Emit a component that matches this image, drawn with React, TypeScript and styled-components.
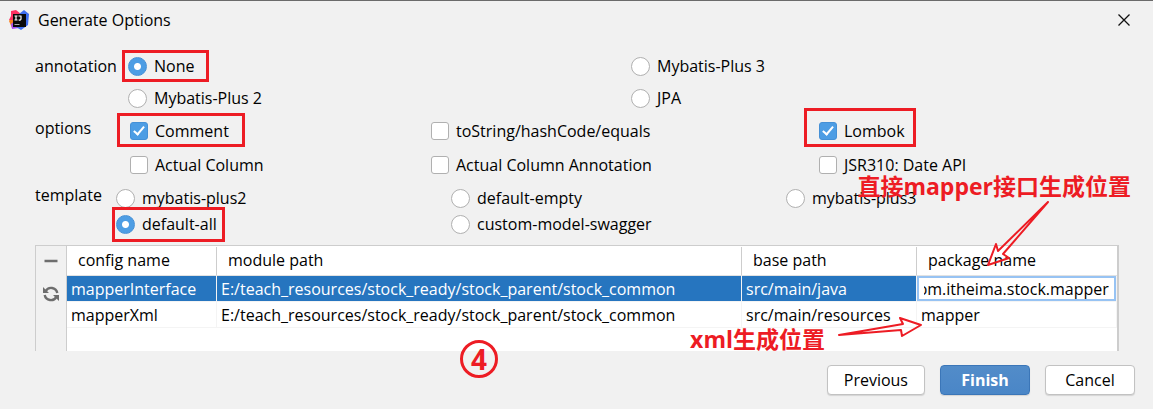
import React, { useEffect, useRef, useState } from "react";
import styled, { createGlobalStyle, css } from "styled-components";

const red = "#ed1c24";
const blue = "#4d9de4";

const GlobalStyle = createGlobalStyle`
  *, *::before, *::after { box-sizing: border-box; }
  body { margin: 0; background: #f1f1f1; }
  body, button, input { font-family: "Open Sans", "Noto Sans CJK SC", sans-serif; font-size: 16px; color: #000; }
`;

const Dialog = styled.main`
  position: relative;
  border-top: 1px solid #6b6b6b;
  background: #f1f1f1;
  min-height: 100vh;
  line-height: 24px;
  overflow: hidden;
`;

const TitleBar = styled.header`
  display: flex;
  align-items: center;
  gap: 9px;
  height: 37px;
  padding: 0 23px 0 9px;
`;

const Title = styled.h1`
  flex: 1;
  margin: 0;
  font-size: 16px;
  font-weight: 400;
`;

const CloseButton = styled.button`
  display: flex;
  padding: 0;
  border: 0;
  background: none;
`;

const Form = styled.form`
  padding: 12px 18px 0 35px;
`;

const Section = styled.div<{ $indent: number; $after: number }>`
  display: grid;
  grid-template-columns: ${(p) => p.$indent}px 1fr;
  margin: 0 14px ${(p) => p.$after}px 0;
`;

const SectionLabel = styled.span<{ $line: number }>`
  line-height: ${(p) => p.$line}px;
`;

const Choices = styled.div<{ $columns: string; $row: number }>`
  display: grid;
  grid-template-columns: ${(p) => p.$columns};
  grid-auto-rows: ${(p) => p.$row}px;
  align-items: center;
  justify-items: start;
`;

const Choice = styled.label<{ $frame?: string }>`
  position: relative;
  display: flex;
  align-items: center;
  gap: 7px;
  white-space: nowrap;
  ${(p) =>
    p.$frame &&
    css`
      &::after {
        content: "";
        position: absolute;
        inset: ${p.$frame};
        border: 3px solid ${red};
        pointer-events: none;
      }
    `}
`;

const Radio = styled.input.attrs({ type: "radio" })`
  appearance: none;
  width: 19px;
  height: 19px;
  margin: 0;
  border: 1px solid #b0b0b0;
  border-radius: 50%;
  background: #fff;
  &:checked {
    border-color: #4590d6;
    background: radial-gradient(circle, #fff 3px, ${blue} 4px);
  }
`;

const Checkbox = styled.input.attrs({ type: "checkbox" })`
  appearance: none;
  display: grid;
  place-items: center;
  width: 18px;
  height: 18px;
  margin: 0;
  border: 1px solid #b0b0b0;
  border-radius: 3px;
  background: #fff;
  &:checked {
    border-color: #4590d6;
    background: ${blue};
  }
  &:checked::before {
    content: "";
    width: 6px;
    height: 11px;
    margin-bottom: 3px;
    border: solid #fff;
    border-width: 0 2px 2px 0;
    transform: rotate(40deg);
  }
`;

const Panel = styled.div`
  display: flex;
  height: 106px;
  margin-right: 16px;
  border: solid #cdcdcd;
  border-width: 1px 2px 0 1px;
  background: #fff;
`;

const Tools = styled.div`
  display: flex;
  flex-direction: column;
  align-items: center;
  gap: 16px;
  width: 31px;
  padding-top: 7px;
  border-right: 1px solid #cdcdcd;
  background: #f1f1f1;
`;

const ToolButton = styled.button`
  display: flex;
  padding: 0;
  border: 0;
  background: none;
  color: #6e6e6e;
`;

const Table = styled.table`
  flex: 1;
  align-self: flex-start;
  width: 100%;
  table-layout: fixed;
  border-collapse: separate;
  border-spacing: 0;
`;

const Col = styled.col<{ $width?: number }>`
  width: ${(p) => (p.$width ? `${p.$width}px` : "auto")};
`;

const HeadCell = styled.th`
  height: 30px;
  padding: 0 11px 2px;
  border-bottom: 1px solid #e2e2e2;
  background: linear-gradient(#cdcdcd, #cdcdcd) right center / 1px 28px no-repeat;
  font-weight: 400;
  text-align: left;
  &:last-child { background: none; }
`;

const Row = styled.tr<{ $selected?: boolean }>`
  background: ${(p) => (p.$selected ? "#2675bf" : "#fff")};
  color: ${(p) => (p.$selected ? "#fff" : "#000")};
`;

const Cell = styled.td`
  height: 26px;
  padding: 0 4px;
  border: solid #f4f4f4;
  border-width: 0 1px 1px 0;
  white-space: nowrap;
`;

const EditCell = styled(Cell)`
  padding: 0;
  background: #fff;
`;

const CellInput = styled.input`
  display: block;
  width: 100%;
  height: 25px;
  padding: 0 5px;
  border: 2px solid #97c3f3;
  outline: 0;
  background: #fff;
`;

const Footer = styled.footer`
  display: flex;
  justify-content: flex-end;
  gap: 15px;
  padding: 14px 0;
`;

const Button = styled.button<{ $primary?: boolean }>`
  height: 30px;
  min-width: 90px;
  padding: 0 16px;
  border: 1px solid ${(p) => (p.$primary ? "#3b76b8" : "#c2c2c2")};
  border-radius: 4px;
  background: ${(p) => (p.$primary ? "linear-gradient(#528cc9, #4a86c7)" : "#fff")};
  box-shadow: 0 1px 1px rgba(0, 0, 0, 0.12);
  color: ${(p) => (p.$primary ? "#fff" : "#000")};
  font-weight: ${(p) => (p.$primary ? 700 : 400)};
`;

const Note = styled.p<{ $right: number; $top: number }>`
  position: absolute;
  right: ${(p) => p.$right}px;
  top: ${(p) => p.$top}px;
  margin: 0;
  color: ${red};
  font-size: 23px;
  font-weight: 700;
  line-height: 32px;
  white-space: nowrap;
  pointer-events: none;
`;

const Arrow = styled.svg<{ $right: number; $top: number }>`
  position: absolute;
  right: ${(p) => p.$right}px;
  top: ${(p) => p.$top}px;
  fill: none;
  stroke: ${red};
  stroke-width: 2;
  stroke-linejoin: round;
  pointer-events: none;
`;

const Step = styled.span`
  position: absolute;
  right: 655px;
  top: 339px;
  display: grid;
  place-items: center;
  width: 38px;
  height: 38px;
  border: 3px solid ${red};
  border-radius: 50%;
  color: ${red};
  font-size: 28px;
  font-weight: 700;
  line-height: 32px;
  pointer-events: none;
`;

const IdeaLogo = () => (
  <svg width="20" height="20" viewBox="0 0 20 20" aria-hidden="true">
    <path d="M0 11 3 6 9 11 7 17 3 18z" fill="#fc801d" />
    <path d="M2 1 7 0 12 4 6 10 0 10 2 6z" fill="#fe2f62" />
    <path d="M2 14 7 10 13 17 10 18 3 19z" fill="#a64df0" />
    <path d="M10 4 15 0 20 4 19 15 12 20 7 17z" fill="#3f6ff0" />
    <rect x="4" y="4" width="13" height="13" fill="#0a0a0a" />
    <path d="M5.500 6h3M7 6v4M5.500 10h3M9.500 6h3M12 6v3q0 1.200-2.400 1" fill="none" stroke="#fff" strokeWidth="1.200" />
    <path d="M5.500 14.500h5" stroke="#aaa" strokeWidth="1" />
  </svg>
);

const CloseIcon = () => (
  <svg width="12" height="12" viewBox="0 0 12 12" aria-hidden="true">
    <path d="M.5.5l11 11M11.500.5l-11 11" stroke="#111" strokeWidth="1.300" />
  </svg>
);

const MinusIcon = () => (
  <svg width="16" height="16" viewBox="0 0 16 16" aria-hidden="true">
    <path d="M1.500 8h13" stroke="currentColor" strokeWidth="2.500" />
  </svg>
);

const RefreshIcon = () => (
  <svg width="18" height="18" viewBox="0 0 18 18" aria-hidden="true">
    <path d="M3.600 6.200A6.300 6.300 0 0 1 15.300 8M14.400 11.800A6.300 6.300 0 0 1 2.700 10" fill="none" stroke="currentColor" strokeWidth="2.400" />
    <path d="M1 2v6h6zM17 16v-6h-6z" fill="currentColor" />
  </svg>
);

type Item = { text: string; frame?: string };

const annotations: Item[] = [
  { text: "None", frame: "-4px -15px -4px -6px" },
  { text: "Mybatis-Plus 3" },
  { text: "Mybatis-Plus 2" },
  { text: "JPA" },
];

const options: Item[] = [
  { text: "Comment", frame: "-6px -16px -4px -13px" },
  { text: "toString/hashCode/equals" },
  { text: "Lombok", frame: "-11px -11px -4px -15px" },
  { text: "Actual Column" },
  { text: "Actual Column Annotation" },
  { text: "JSR310: Date API" },
];

const templates: Item[] = [
  { text: "mybatis-plus2" },
  { text: "default-empty" },
  { text: "mybatis-plus3" },
  { text: "default-all", frame: "-5px -8px -6px -4px" },
  { text: "custom-model-swagger" },
];

const modulePath = "E:/teach_resources/stock_ready/stock_parent/stock_common";

export default function App() {
  const [annotation, setAnnotation] = useState("None");
  const [template, setTemplate] = useState("default-all");
  const [checked, setChecked] = useState(["Comment", "Lombok"]);
  const packageInput = useRef<HTMLInputElement>(null);

  // Keep the end of a long package name in view.
  useEffect(() => {
    const input = packageInput.current;
    if (input) input.scrollLeft = input.scrollWidth;
  }, []);

  const toggle = (text: string) =>
    setChecked((list) => (list.includes(text) ? list.filter((t) => t !== text) : [...list, text]));

  return (
    <Dialog>
      <GlobalStyle />
      <TitleBar>
        <IdeaLogo />
        <Title>Generate Options</Title>
        <CloseButton type="button" aria-label="Close">
          <CloseIcon />
        </CloseButton>
      </TitleBar>
      <Form onSubmit={(e) => e.preventDefault()}>
        <Section $indent={93} $after={0} role="radiogroup" aria-labelledby="annotation">
          <SectionLabel id="annotation" $line={32}>annotation</SectionLabel>
          <Choices $columns="503fr 490fr" $row={32}>
            {annotations.map(({ text, frame }) => (
              <Choice key={text} $frame={frame}>
                <Radio name="annotation" checked={annotation === text} onChange={() => setAnnotation(text)} />
                {text}
              </Choice>
            ))}
          </Choices>
        </Section>
        <Section $indent={95} $after={3} role="group" aria-labelledby="options">
          <SectionLabel id="options" $line={28}>options</SectionLabel>
          <Choices $columns="301fr 388fr 302fr" $row={34}>
            {options.map(({ text, frame }) => (
              <Choice key={text} $frame={frame}>
                <Checkbox checked={checked.includes(text)} onChange={() => toggle(text)} />
                {text}
              </Choice>
            ))}
          </Choices>
        </Section>
        <Section $indent={81} $after={8} role="radiogroup" aria-labelledby="template">
          <SectionLabel id="template" $line={20}>template</SectionLabel>
          <Choices $columns="repeat(3, 1fr)" $row={26}>
            {templates.map(({ text, frame }) => (
              <Choice key={text} $frame={frame}>
                <Radio name="template" checked={template === text} onChange={() => setTemplate(text)} />
                {text}
              </Choice>
            ))}
          </Choices>
        </Section>
        <Panel>
          <Tools>
            <ToolButton type="button" aria-label="Remove"><MinusIcon /></ToolButton>
            <ToolButton type="button" aria-label="Refresh"><RefreshIcon /></ToolButton>
          </Tools>
          <Table>
            <colgroup>
              <Col $width={150} />
              <Col />
              <Col $width={175} />
              <Col $width={200} />
            </colgroup>
            <thead>
              <tr>
                <HeadCell>config name</HeadCell>
                <HeadCell>module path</HeadCell>
                <HeadCell>base path</HeadCell>
                <HeadCell>package name</HeadCell>
              </tr>
            </thead>
            <tbody>
              <Row $selected>
                <Cell>mapperInterface</Cell>
                <Cell>{modulePath}</Cell>
                <Cell>src/main/java</Cell>
                <EditCell>
                  <CellInput ref={packageInput} aria-label="package name" defaultValue="com.itheima.stock.mapper" />
                </EditCell>
              </Row>
              <Row>
                <Cell>mapperXml</Cell>
                <Cell>{modulePath}</Cell>
                <Cell>src/main/resources</Cell>
                <Cell>mapper</Cell>
              </Row>
            </tbody>
          </Table>
        </Panel>
        <Footer>
          <Button type="button">Previous</Button>
          <Button type="submit" $primary>Finish</Button>
          <Button type="button">Cancel</Button>
        </Footer>
      </Form>
      <Note $right={22} $top={169}>直接mapper接口生成位置</Note>
      <Arrow $right={103} $top={199} width="64" height="68" viewBox="0 0 64 68" aria-hidden="true">
        <path d="M62 2 12 51 10 44 2 65 23 58 17 54z" />
      </Arrow>
      <Note $right={328} $top={322}>xml生成位置</Note>
      <Arrow $right={230} $top={315} width="88" height="24" viewBox="0 0 88 24" aria-hidden="true">
        <path d="M4 19 68 8 65 2 86 9 67 20 66 14z" />
      </Arrow>
      <Step>4</Step>
    </Dialog>
  );
}
